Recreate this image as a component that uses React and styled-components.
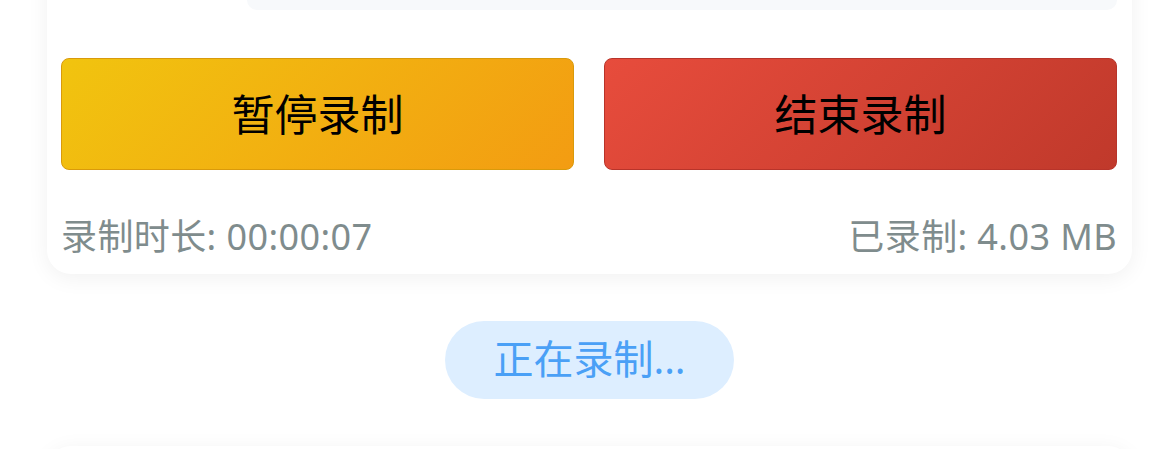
import React from 'react'
import styled, { createGlobalStyle } from 'styled-components'

const GlobalStyle = createGlobalStyle`
    html, body {
        margin: 0;
        padding: 0;
        background: #ffffff;
    }
    body {
        font-family: "Noto Sans", "Noto Sans CJK SC", sans-serif;
        overflow: hidden;
    }
`

const Page = styled.div`
    display: flex;
    flex-direction: column;
    align-items: center;
    gap: 47px;
    padding: 0 41px 0 47px;
    margin-top: -85px;
`

const Card = styled.section`
    width: 100%;
    box-sizing: border-box;
    background: #fff;
    border-radius: 24px;
    box-shadow: 0 4px 22px rgba(0, 0, 0, 0.06);
    padding: 15px 15px 16px 14px;
    display: flex;
    flex-direction: column;
`

const PreviewRow = styled.div`
    display: grid;
    grid-template-columns: 170px 1fr;
    gap: 16px;
    margin-bottom: 48px;
`

const PreviewThumb = styled.div`
    height: 80px;
`

const PreviewBox = styled.div`
    height: 80px;
    background: #f7f9fb;
    border-radius: 10px;
`

const Actions = styled.div`
    display: grid;
    grid-template-columns: 1fr 1fr;
    gap: 30px;
    margin-bottom: 46px;
`

const tones = {
    pause: {
        bg: 'linear-gradient(135deg, #f1c40f 0%, #f39c12 100%)',
        border: '#d99a0b',
    },
    stop: {
        bg: 'linear-gradient(135deg, #e74c3c 0%, #c0392b 100%)',
        border: '#b8342a',
    },
}

const ActionButton = styled.button`
    height: 112px;
    border-radius: 8px;
    border: 1px solid ${p => tones[p.$tone].border};
    background: ${p => tones[p.$tone].bg};
    color: #000;
    font-family: "Noto Sans CJK SC", sans-serif;
    font-size: 43px;
    padding: 0 0 4px;
    display: flex;
    align-items: center;
    justify-content: center;
    cursor: pointer;
`

const Stats = styled.div`
    display: flex;
    justify-content: space-between;
    align-items: center;
    font-size: 36px;
    line-height: 42px;
    letter-spacing: 0.4px;
    color: #7f8c8d;
`

const StatusPill = styled.div`
    width: 289px;
    height: 78px;
    box-sizing: border-box;
    padding-bottom: 6px;
    border-radius: 39px;
    background: #ddeeff;
    color: #4aa0f6;
    font-size: 40px;
    display: flex;
    align-items: center;
    justify-content: center;
`

const NextCard = styled(Card)`
    height: 200px;
`

export default function App() {
    return (
        <>
            <GlobalStyle />
            <Page>
                <Card>
                    <PreviewRow>
                        <PreviewThumb />
                        <PreviewBox />
                    </PreviewRow>
                    <Actions>
                        <ActionButton $tone="pause">暂停录制</ActionButton>
                        <ActionButton $tone="stop">结束录制</ActionButton>
                    </Actions>
                    <Stats>
                        <span>录制时长: 00:00:07</span>
                        <span>已录制: 4.03 MB</span>
                    </Stats>
                </Card>
                <StatusPill>正在录制...</StatusPill>
                <NextCard />
            </Page>
        </>
    )
}
